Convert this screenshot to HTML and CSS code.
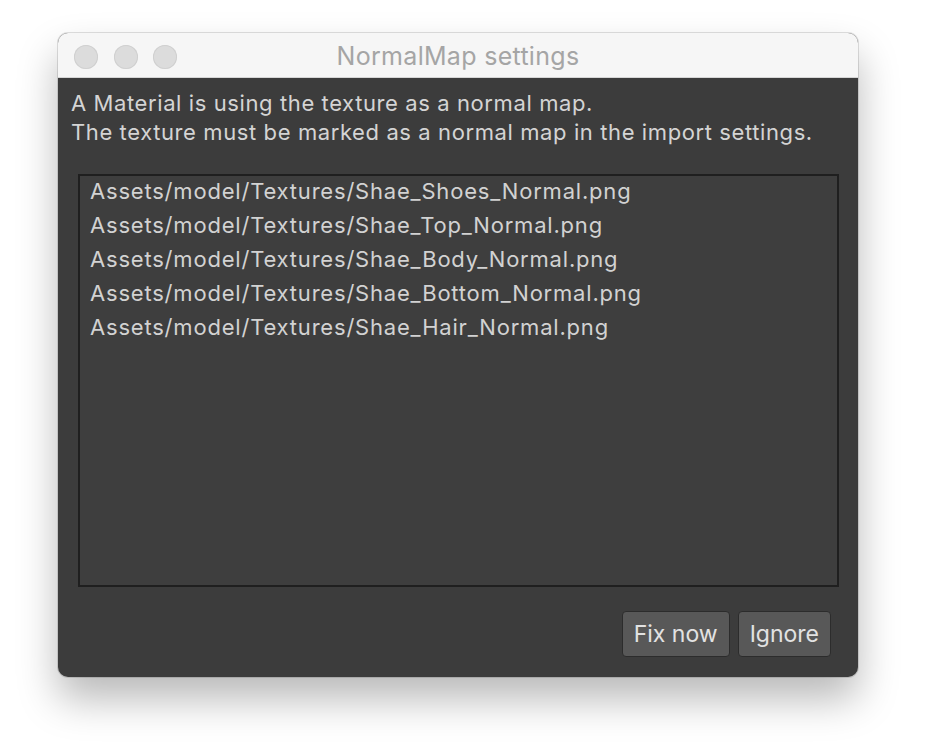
FILE: index.html
```html
<!DOCTYPE html>
<html>
<head>
<meta charset="utf-8">
<link rel="stylesheet" href="styles.css">
</head>
<body>
<div class="window">
  <div class="titlebar">
    <div class="lights">
      <span class="light"></span><span class="light"></span><span class="light"></span>
    </div>
    <div class="title">NormalMap settings</div>
  </div>
  <div class="content">
    <p class="msg">A Material is using the texture as a normal map.<br>The texture must be marked as a normal map in the import settings.</p>
    <div class="list">
      <div class="item">Assets/model/Textures/Shae_Shoes_Normal.png</div>
      <div class="item">Assets/model/Textures/Shae_Top_Normal.png</div>
      <div class="item">Assets/model/Textures/Shae_Body_Normal.png</div>
      <div class="item">Assets/model/Textures/Shae_Bottom_Normal.png</div>
      <div class="item">Assets/model/Textures/Shae_Hair_Normal.png</div>
    </div>
    <div class="buttons">
      <button class="btn">Fix now</button>
      <button class="btn">Ignore</button>
    </div>
  </div>
</div>
</body>
</html>
```
FILE: styles.css
```css
html, body {
  margin: 0;
  padding: 0;
  background: #ffffff;
  font-family: Inter, "Noto Sans", sans-serif;
}
body {
  padding: 33px 0 0 58px;
  width: 934px;
  height: 756px;
  box-sizing: border-box;
  overflow: hidden;
}
.window {
  width: 800px;
  height: 644px;
  border-radius: 10px;
  overflow: hidden;
  display: flex;
  flex-direction: column;
  box-shadow: 0 0 0 1px rgba(0,0,0,0.12), 0 22px 40px rgba(0,0,0,0.28);
  background: #3c3c3c;
}
.titlebar {
  height: 44px;
  flex: none;
  background: #f6f6f6;
  border-bottom: 1px solid #d6d6d6;
  position: relative;
  display: flex;
  align-items: center;
  justify-content: center;
}
.lights {
  position: absolute;
  left: 16px;
  top: 12px;
  display: flex;
  gap: 15.5px;
}
.light {
  width: 24px;
  height: 24px;
  border-radius: 50%;
  background: #dcdcdc;
  box-shadow: inset 0 0 0 1px #d0d0d0;
}
.title {
  font-size: 25px;
  letter-spacing: 0.3px;
  color: #a5a5a5;
  padding-top: 2px;
}
.content {
  flex: 1;
  display: flex;
  flex-direction: column;
  padding: 11px 19px 19px 20px;
}
.msg {
  margin: 0 0 0 -7px;
  font-size: 22px;
  letter-spacing: 0.6px;
  line-height: 29px;
  color: #d4d4d4;
}
.list {
  margin-top: 27px;
  height: 413px;
  flex: none;
  box-sizing: border-box;
  border: 2px solid #1f1f1f;
  background: #3e3e3e;
  padding: 0 0 0 10px;
}
.item {
  font-size: 22px;
  letter-spacing: 0.8px;
  line-height: 34px;
  color: #d2d2d2;
}
.item:first-child {
  margin-top: -2px;
}
.buttons {
  margin-top: 24px;
  display: flex;
  justify-content: flex-end;
  gap: 8px;
  padding-right: 8px;
}
.btn {
  font-family: Inter, "Noto Sans", sans-serif;
  font-size: 23px;
  color: #e2e2e2;
  background: #585858;
  border: 1px solid #2c2c2c;
  border-radius: 4px;
  height: 46px;
  padding: 0 11px;
}
```
